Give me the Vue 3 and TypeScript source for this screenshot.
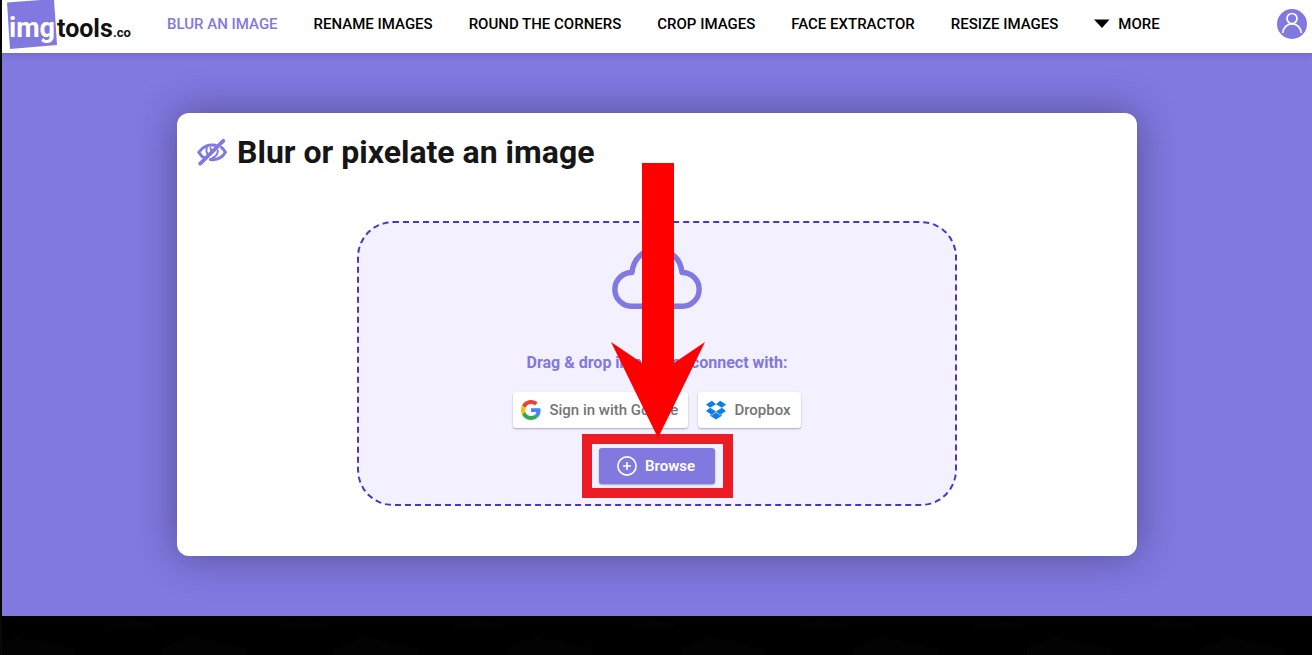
<script setup lang="ts">
interface NavItem {
  label: string
  active?: boolean
}

const navItems: NavItem[] = [
  { label: 'BLUR AN IMAGE', active: true },
  { label: 'RENAME IMAGES' },
  { label: 'ROUND THE CORNERS' },
  { label: 'CROP IMAGES' },
  { label: 'FACE EXTRACTOR' },
  { label: 'RESIZE IMAGES' },
]
</script>

<template>
  <div class="page">
    <header class="header">
      <a class="logo" href="#" aria-label="imgtools.co">
        <svg width="128" height="49" viewBox="0 0 128 49" aria-hidden="true">
          <path d="M1 2.500L48 -1L51 45L4 49Z" fill="#8178e0" />
          <text class="logo-img" x="3" y="37">img</text>
          <text class="logo-tools" x="51" y="37">tools</text>
          <text class="logo-co" x="107" y="37">.co</text>
        </svg>
      </a>
      <nav class="nav">
        <a
          v-for="item in navItems"
          :key="item.label"
          href="#"
          class="nav-link"
          :class="{ active: item.active }"
        >{{ item.label }}</a>
        <button type="button" class="nav-link more">
          <svg width="16" height="10" viewBox="0 0 16 10" aria-hidden="true">
            <path d="M0 0.500H15.500L8 9Z" fill="#000" />
          </svg>
          MORE
        </button>
      </nav>
      <button type="button" class="account" aria-label="Account">
        <svg width="30" height="30" viewBox="0 0 30 30" aria-hidden="true">
          <circle cx="15" cy="15" r="15" fill="#8178e0" />
          <g fill="none" stroke="#fff" stroke-width="1.700">
            <circle cx="15" cy="9.500" r="5" />
            <path d="M5.700 24C6.300 18.500 10 14.800 15 14.800S23.700 18.500 24.300 24" />
          </g>
        </svg>
      </button>
    </header>

    <main class="hero">
      <section class="card">
        <h1 class="title">
          <svg width="30" height="28" viewBox="0 0 30 28" aria-hidden="true">
            <g fill="none" stroke="#8178e0" stroke-linecap="round">
              <path d="M18.500 7.300C12 6 5.500 8.500 1.800 14.300C3.200 16.800 5 18.800 7.500 20" stroke-width="3" />
              <path d="M24.500 9.500C26.200 10.800 27.400 12.500 28.400 14.300C25.200 19.800 19.500 22.300 13.500 21.500" stroke-width="3" />
              <path d="M9.800 9.500C9 12 9.300 14.500 10.800 16.500M13.500 10C13.500 11.500 13.800 12.500 14.800 12.800M20.800 12.500C21 16 18.500 19 15.500 19.700" stroke-width="2" />
              <path d="M3.200 25.600L26.300 2.800" stroke-width="3.800" />
            </g>
          </svg>
          Blur or pixelate an image
        </h1>

        <div class="dropzone">
          <svg class="cloud" width="90" height="62" viewBox="0 0 90 62" aria-hidden="true">
            <path
              d="M19.500 59.300H70.500A16.900 16.900 0 0 0 70 25.500C68.500 10.500 58 2.700 45 2.700S21.500 10.500 20 25.500A16.900 16.900 0 0 0 19.500 59.300Z"
              fill="none"
              stroke="#8178e0"
              stroke-width="5.400"
              stroke-linejoin="round"
            />
          </svg>
          <p class="hint">Drag &amp; drop images or connect with:</p>
          <div class="providers">
            <button type="button" class="btn">
              <svg width="20" height="20" viewBox="0 0 48 48" aria-hidden="true">
                <path fill="#ea4335" d="M24 9.500c3.540 0 6.710 1.220 9.210 3.600l6.850-6.850C35.900 2.380 30.470 0 24 0 14.620 0 6.510 5.380 2.560 13.220l7.980 6.190C12.430 13.720 17.740 9.500 24 9.500z" />
                <path fill="#4285f4" d="M46.980 24.550c0-1.570-.15-3.090-.38-4.550H24v9.020h12.940c-.58 2.960-2.260 5.480-4.780 7.180l7.730 6c4.510-4.180 7.090-10.360 7.090-17.650z" />
                <path fill="#fbbc05" d="M10.530 28.590c-.48-1.450-.76-2.990-.76-4.590s.27-3.140.76-4.590l-7.980-6.190C.92 16.460 0 20.120 0 24c0 3.880.92 7.540 2.560 10.780l7.970-6.190z" />
                <path fill="#34a853" d="M24 48c6.480 0 11.930-2.130 15.890-5.810l-7.730-6c-2.150 1.450-4.920 2.300-8.160 2.300-6.260 0-11.570-4.220-13.470-9.910l-7.980 6.190C6.510 42.620 14.620 48 24 48z" />
              </svg>
              Sign in with Google
            </button>
            <button type="button" class="btn">
              <svg width="20" height="20" viewBox="0 0 20 20" aria-hidden="true">
                <path
                  fill="#0a7fe8"
                  d="M5.900 0.800L10 4.200L4.100 7.800L0 4.600ZM14.100 0.800L20 4.600L15.900 7.800L10 4.200ZM4.100 7.800L10 11.500L5.900 14.900L0 11.100ZM15.900 7.800L20 11.100L14.100 14.900L10 11.500ZM10 12.200L14.100 15.600L15.900 14.500V15.800L10 19.400L4.100 15.800V14.500L5.900 15.600Z"
                />
              </svg>
              Dropbox
            </button>
          </div>
          <div class="browse">
            <button type="button" class="btn primary">
              <svg width="20" height="20" viewBox="0 0 20 20" aria-hidden="true">
                <g fill="none" stroke="#fff" stroke-width="1.600">
                  <circle cx="10" cy="10" r="9.100" />
                  <path d="M10 6V14M6 10H14" />
                </g>
              </svg>
              Browse
            </button>
            <span class="marker"></span>
            <svg class="arrow" width="94" height="275" viewBox="0 0 94 275" aria-hidden="true">
              <path d="M31 0H63V200L94 179L47 275L0 179L31 200Z" fill="#f00" />
            </svg>
          </div>
        </div>
      </section>
    </main>

    <footer class="footer">
      <svg width="100%" height="39" aria-hidden="true">
        <defs>
          <pattern id="peaks" width="173" height="39" patternUnits="userSpaceOnUse" x="-69">
            <path d="M56 39V33L84 21L140 33V39ZM0 11L22 3L50 8V11Z" fill="#030303" />
          </pattern>
        </defs>
        <rect width="100%" height="39" fill="url(#peaks)" />
      </svg>
    </footer>
  </div>
</template>

<style>
body {
  margin: 0;
  background: #000;
}
</style>

<style scoped>
.page {
  box-sizing: border-box;
  display: flex;
  flex-direction: column;
  min-height: 100vh;
  border-left: 2px solid #080808;
  font-family: Roboto, "Liberation Sans", sans-serif;
  color: #000;
}

button {
  font-family: inherit;
  border: 0;
  cursor: pointer;
}

svg {
  display: block;
  flex: none;
}

.header {
  position: relative;
  display: flex;
  align-items: center;
  box-sizing: border-box;
  height: 53px;
  padding-right: 5px;
  background: #fff;
  box-shadow: 0 0 8px rgba(0, 0, 0, 0.2);
}

.logo {
  align-self: flex-start;
  margin-left: 4px;
}

.logo text {
  font-weight: 700;
  fill: #111;
}

.logo .logo-img {
  font-size: 27px;
  fill: #fff;
}

.logo .logo-tools {
  font-size: 25px;
}

.logo .logo-co {
  font-size: 13px;
}

.nav {
  display: flex;
  gap: 36px;
  flex: 1;
  margin: 0 0 6px 33px;
}

.nav-link {
  padding: 0;
  background: none;
  font-size: 15px;
  line-height: 20px;
  font-weight: 500;
  color: #000;
  text-decoration: none;
  white-space: nowrap;
}

.nav-link.active {
  color: #8178e0;
}

.more {
  display: flex;
  align-items: center;
  gap: 8px;
}

.account {
  padding: 0;
  margin-bottom: 6px;
  background: none;
}

.hero {
  padding: 60px 20px;
  background: #8178e0;
}

.card {
  box-sizing: border-box;
  max-width: 960px;
  margin: 0 auto;
  padding: 20px 20px 50px;
  border-radius: 12px;
  background: #fff;
  box-shadow: 0 0 40px rgba(0, 0, 0, 0.35);
}

.title {
  display: flex;
  align-items: center;
  gap: 10px;
  margin: 0 0 50px;
  font-size: 32px;
  line-height: 38px;
  font-weight: 700;
  color: #161616;
}

.dropzone {
  box-sizing: border-box;
  display: flex;
  flex-direction: column;
  align-items: center;
  max-width: 600px;
  margin: 0 auto;
  padding: 24px 20px 20px;
  border: 2px dashed #4b36c4;
  border-radius: 36px;
  background: #f3f0ff;
}

.hint {
  margin: 44px 0 20px;
  font-size: 16px;
  line-height: 19px;
  font-weight: 700;
  color: #8178e0;
}

.providers {
  display: flex;
  gap: 10px;
  margin-bottom: 20px;
}

.btn {
  display: flex;
  align-items: center;
  gap: 8px;
  height: 36px;
  padding: 0 10px 0 8px;
  border-radius: 3px;
  background: #fff;
  box-shadow: 0 1px 2px rgba(0, 0, 0, 0.3);
  font-size: 15px;
  font-weight: 500;
  color: #757575;
  white-space: nowrap;
}

.primary {
  padding: 0 20px 0 18px;
  background: #8178e0;
  font-weight: 600;
  color: #fff;
}

.browse {
  position: relative;
}

.marker {
  position: absolute;
  inset: -14px -18px -14px -17px;
  border: 10px solid #ed1c24;
  pointer-events: none;
}

.arrow {
  position: absolute;
  left: 12px;
  bottom: calc(100% + 10px);
  pointer-events: none;
}

.footer {
  flex: 1;
  background: #000;
}
</style>
